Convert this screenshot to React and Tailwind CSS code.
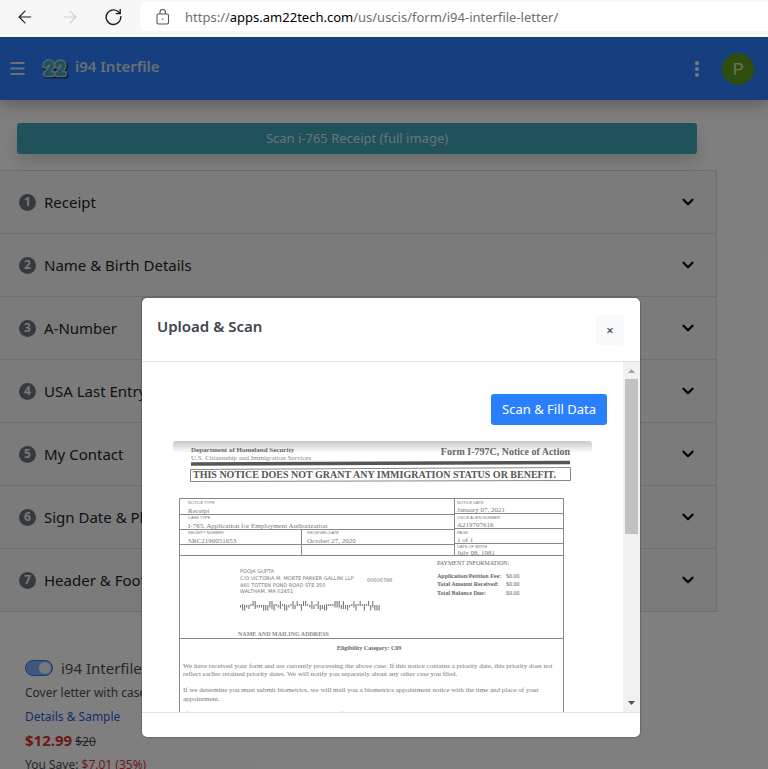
import React from 'react';
import { ArrowLeft, ArrowRight, ChevronDown, Menu } from 'lucide-react';

const sections = [
    'Receipt',
    'Name & Birth Details',
    'A-Number',
    'USA Last Entry',
    'My Contact',
    'Sign Date & Place',
    'Header & Footer',
];

const barcode = '9739648299933352749247394268478849264236374445556263945748474835333';

function BrowserBar() {
    return (
        <div className="flex h-[37px] shrink-0 bg-[#f7f7f7]">
            <div className="flex w-[140px] items-center gap-[25px] pb-1 pl-[15px]">
                <button type="button" aria-label="Back" className="text-[#1c1c1c]">
                    <ArrowLeft size={20} strokeWidth={1.4} />
                </button>
                <button type="button" aria-label="Forward" className="text-[#cfcfcf]">
                    <ArrowRight size={20} strokeWidth={1.4} />
                </button>
                <button type="button" aria-label="Reload" className="text-[#1c1c1c]">
                    <svg width="17" height="18" viewBox="0 0 17 18" fill="none" stroke="currentColor" strokeWidth="1.4">
                        <path d="M15.700 8.200a7.300 7.300 0 1 1-2.700-4.700l1.800 1.800" />
                        <path d="M15.2 1v4.600h-4.600" />
                    </svg>
                </button>
            </div>
            <div className="mt-0.5 mb-1.5 flex flex-1 items-center gap-[15px] rounded-l-md bg-white pb-1 pl-4">
                <svg className="mt-1 shrink-0" width="14" height="16" viewBox="0 0 14 16" fill="none" stroke="#555" strokeWidth="1.1">
                    <rect x="1" y="5" width="11.500" height="10" rx="1.500" />
                    <path d="M4 5V3.200a2.700 2.700 0 0 1 5.400 0V5" />
                    <circle cx="6.700" cy="10" r="0.8" fill="#555" stroke="none" />
                </svg>
                <p className="mt-1 text-[13px] leading-5 whitespace-nowrap text-[#6e6e6e]">
                    https://<span className="text-black">apps.am22tech.com</span>/us/uscis/form/i94-interfile-letter/
                </p>
            </div>
        </div>
    );
}

function Logo() {
    return (
        <svg width="28" height="22" viewBox="0 0 28 22" className="shrink-0" aria-hidden="true">
            <g fill="none" strokeLinecap="round" strokeLinejoin="round">
                <g stroke="#16305f" strokeWidth="7">
                    <path d="M5.500 8.500Q6 5.500 9 5.500Q12 5.500 12 8.500Q12 11 6 17H12.500" />
                    <path d="M17 8.500Q17.500 5.500 20.500 5.500Q23.500 5.500 23.500 8.500Q23.500 11 17.500 17H24" />
                </g>
                <g stroke="#a4cbd4" strokeWidth="6.500">
                    <path d="M4.500 7.500Q5 4.500 8 4.500Q11 4.500 11 7.500Q11 10 5 16H11.500" />
                    <path d="M16 7.500Q16.500 4.500 19.500 4.500Q22.500 4.500 22.500 7.500Q22.500 10 16.500 16H23" />
                </g>
                <g stroke="#3fa3b8" strokeWidth="3.400">
                    <path d="M4.500 7.500Q5 4.500 8 4.500Q11 4.500 11 7.500Q11 10 5 16H11.500" />
                    <path d="M16 7.500Q16.500 4.500 19.500 4.500Q22.500 4.500 22.500 7.500Q22.500 10 16.500 16H23" />
                </g>
            </g>
        </svg>
    );
}

function NavBar() {
    return (
        <header className="relative flex h-[63px] items-center bg-[#2a7fff] pr-3.5 pl-2 shadow-[0_6px_14px_rgba(0,0,0,0.25)]">
            <button type="button" aria-label="Menu" className="text-[#d4e0f0]">
                <Menu size={19} strokeWidth={2.500} />
            </button>
            <a href="#home" className="ml-3.5 flex items-center gap-1.5">
                <Logo />
                <span className="pb-1.5 text-[15px] leading-6 font-semibold text-[#d4dcea]">i94 Interfile</span>
            </a>
            <button type="button" aria-label="More" className="ml-auto">
                <svg width="6" height="16" viewBox="0 0 6 16" fill="#e6ecf6">
                    <circle cx="3" cy="2.2" r="2.1" />
                    <circle cx="3" cy="8" r="2.1" />
                    <circle cx="3" cy="13.8" r="2.1" />
                </svg>
            </button>
            <button type="button" className="ml-[22px] size-8 rounded-full bg-[#5f9c1c] font-[Roboto] text-[17px] leading-8 text-[#d5e0c8]">
                P
            </button>
        </header>
    );
}

function Accordion() {
    return (
        <div className="mt-4 mr-[51px] border-t border-r border-[#dcdcdc] bg-[#f7f7f7]">
            {sections.map((title, i) => (
                <button key={title} type="button" className="flex h-[63px] w-full items-center border-b border-[#dcdcdc] pr-[19px] pl-[19px] text-left">
                    <span className="flex size-[17px] items-center justify-center rounded-full bg-[#6c757d] text-[12px] leading-4 font-bold text-[#f0f0f0]">
                        {i + 1}
                    </span>
                    <span className="ml-2 text-[15px] leading-6 text-[#212529]">{title}</span>
                    <ChevronDown className="ml-auto text-black" size={18} strokeWidth={3} />
                </button>
            ))}
        </div>
    );
}

function Product() {
    return (
        <div className="mt-11 pl-[25px] text-[12px] leading-6 text-[#4a4f55]">
            <label className="flex items-center gap-2 text-[15px] leading-6">
                <input type="checkbox" defaultChecked className="peer sr-only" />
                <span className="flex h-4 w-7 items-center justify-end rounded-full border border-[#2f7fea] bg-[#7db1f8] px-px">
                    <span className="size-3 rounded-full bg-[#eef3fb]" />
                </span>
                i94 Interfile
            </label>
            <p className="pt-px">Cover letter with case details</p>
            <a href="#details" className="block text-[#1f5fd0]">Details &amp; Sample</a>
            <p className="leading-[23px]"><b className="text-[15px] text-[#dc2f2f]">$12.99</b> <s>$20</s></p>
            <p>You Save: <span className="text-[#dc3545]">$7.01 (35%)</span></p>
        </div>
    );
}

// Scanned I-797C page
function ReceiptScan() {
    return (
        <svg className="block w-full" viewBox="0 0 420 300" role="img" aria-label="Form I-797C, Notice of Action">
            <defs>
                <linearGradient id="edge" x1="0" y1="0" x2="0" y2="1">
                    <stop offset="0" stopColor="#c8c8c8" />
                    <stop offset="1" stopColor="#ffffff" />
                </linearGradient>
            </defs>
            <path d="M0 12V3q0-3 3-3H416q3 0 3 3V12z" fill="url(#edge)" />
            <g fontFamily="'Liberation Serif', serif" fill="#666">
                <text x="18" y="11" fontSize="7" fontWeight="700">Department of Homeland Security</text>
                <text x="18" y="19" fontSize="7" fill="#888">U.S. Citizenship and Immigration Services</text>
                <text x="397" y="14" fontSize="10" fontWeight="700" textAnchor="end">Form I-797C, Notice of Action</text>
                <text x="20" y="37" fontSize="10" fontWeight="700" fill="#555">THIS NOTICE DOES NOT GRANT ANY IMMIGRATION STATUS OR BENEFIT.</text>
            </g>
            <path d="M18 23L397 21.500" stroke="#555" strokeWidth="3.500" />
            <g fill="none" stroke="#888" strokeWidth="1">
                <path d="M17.500 28.500L397.500 26.500V39.500L17.500 40.500z" />
                <path d="M6.500 300V57.500H390.500V300" />
                <path d="M6.500 73.500H281.500M6.500 88.500H281.500M6.500 103.500H281.500M281.500 72.500H390.500M281.500 87.500H390.500M281.500 102.500H390.500M6.500 114.500H390.500M6.500 197.500H390.500" />
                <path d="M281.500 57.500V114.500M128.500 88.500V114.500" />
            </g>
            <g fontFamily="'Liberation Sans', sans-serif" fontSize="4" fill="#777">
                <text x="15" y="63">NOTICE TYPE</text>
                <text x="15" y="78">CASE TYPE</text>
                <text x="15" y="93">RECEIPT NUMBER</text>
                <text x="134" y="93">RECEIVED DATE</text>
                <text x="284" y="63">NOTICE DATE</text>
                <text x="284" y="78">USCIS ALIEN NUMBER</text>
                <text x="284" y="93">PAGE</text>
                <text x="284" y="107">DATE OF BIRTH</text>
            </g>
            <g fontFamily="'Liberation Serif', serif" fontSize="7" fill="#777">
                <text x="15" y="72">Receipt</text>
                <text x="15" y="87">I-765, Application for Employment Authorization</text>
                <text x="15" y="102">SRC2190051653</text>
                <text x="134" y="102">October 27, 2020</text>
                <text x="284" y="71">January 07, 2021</text>
                <text x="284" y="86">A219707616</text>
                <text x="284" y="101">1 of 1</text>
                <text x="284" y="114">July 08, 1981</text>
            </g>
            <g fontFamily="'DejaVu Sans', sans-serif" fontSize="5" fill="#777">
                <text x="67" y="132">POOJA GUPTA</text>
                <text x="67" y="139">C/O VICTORIA M. MORTE PARKER GALLINI LLP</text>
                <text x="67" y="146">460 TOTTEN POND ROAD STE 350</text>
                <text x="67" y="152">WALTHAM, MA  02451</text>
                <text x="194" y="141">00000786</text>
            </g>
            <g stroke="#777" strokeWidth="1.1">
                {barcode.split('').map((n, i) => (
                    <path key={i} d={`M${67.500 + i * 2.1} ${n % 3 === 1 ? 163 : 164 - (n % 3) * 2}V${165 + (n % 4) * 1.500}`} />
                ))}
            </g>
            <g fontFamily="'Liberation Serif', serif" fontSize="6" fontWeight="700" fill="#666">
                <text x="264" y="124" fontWeight="400">PAYMENT INFORMATION:</text>
                <text x="264" y="137">Application/Petition Fee:</text>
                <text x="333" y="137" fontWeight="400">$0.00</text>
                <text x="264" y="145">Total Amount Received:</text>
                <text x="333" y="145" fontWeight="400">$0.00</text>
                <text x="264" y="154">Total Balance Due:</text>
                <text x="333" y="154" fontWeight="400">$0.00</text>
                <text x="65" y="195" fill="#888">NAME AND MAILING ADDRESS</text>
                <text x="164" y="209">Eligibility Category: C09</text>
            </g>
            <g fontFamily="'Liberation Serif', serif" fontSize="7" fill="#777">
                <text x="10" y="227">We have received your form and are currently processing the above case. If this notice contains a priority date, this priority does not</text>
                <text x="10" y="235">reflect earlier retained priority dates. We will notify you separately about any other case you filed.</text>
                <text x="10" y="251">If we determine you must submit biometrics, we will mail you a biometrics appointment notice with the time and place of your</text>
                <text x="10" y="260">appointment.</text>
                <text x="10" y="275">If you have questions or need to update your personal information listed above, please visit the USCIS Contact Center at uscis.gov.</text>
            </g>
        </svg>
    );
}

function ScrollBar() {
    return (
        <div className="flex w-[17px] shrink-0 flex-col items-center bg-[#f1f1f1]" aria-hidden="true">
            <svg width="17" height="17" viewBox="0 0 17 17"><path d="M5 11h7L8.500 7z" fill="#a3a3a3" /></svg>
            <div className="h-[155px] w-[13px] bg-[#c1c1c1]" />
            <svg className="mt-auto" width="17" height="17" viewBox="0 0 17 17"><path d="M5 6h7L8.500 10z" fill="#505050" /></svg>
        </div>
    );
}

function ScanModal() {
    return (
        <div className="absolute inset-0 flex items-start justify-center bg-black/50 pt-[261px] pl-3.5">
            <div role="dialog" aria-labelledby="modal-title" className="w-full max-w-[498px] overflow-hidden rounded-[5px] bg-white shadow-[0_0_2px_rgba(0,0,0,0.6)]">
                <div className="flex h-16 items-center justify-between border-b border-[#dee2e6] pr-4 pl-[15px]">
                    <h5 id="modal-title" className="pb-2 text-[15px] leading-6 font-semibold text-[#40464c]">Upload &amp; Scan</h5>
                    <button type="button" aria-label="Close" className="h-[30px] w-7 rounded-[3px] bg-[#f8f9fa] text-[13px] leading-7 text-[#333]">
                        ×
                    </button>
                </div>
                <div className="flex h-[350px]">
                    <div className="min-w-0 flex-1 overflow-hidden pt-8 pl-[31px]">
                        <div className="pr-4 text-right">
                            <button type="button" className="h-[31px] rounded-[3px] bg-[#2a7fff] px-[11px] text-[13px] leading-[31px] text-white">
                                Scan &amp; Fill Data
                            </button>
                        </div>
                        <div className="mt-4 pr-[30px]">
                            <ReceiptScan />
                        </div>
                    </div>
                    <ScrollBar />
                </div>
                <div className="h-[25px] border-t border-[#dee2e6]" />
            </div>
        </div>
    );
}

export default function App() {
    return (
        <div className="flex h-screen flex-col overflow-hidden bg-white font-['Noto_Sans',sans-serif]">
            <BrowserBar />
            <div className="relative min-h-0 flex-1 overflow-hidden">
                <NavBar />
                <main>
                    <div className="mr-[71px] ml-[17px] pt-[23px]">
                        <button type="button" className="h-[31px] w-full rounded-[3px] bg-[#41a5b8] text-[13px] text-[#d5e8ec] shadow-[0_8px_16px_rgba(0,0,0,0.15)]">
                            Scan i-765 Receipt (full image)
                        </button>
                    </div>
                    <Accordion />
                    <Product />
                </main>
                <ScanModal />
            </div>
        </div>
    );
}
